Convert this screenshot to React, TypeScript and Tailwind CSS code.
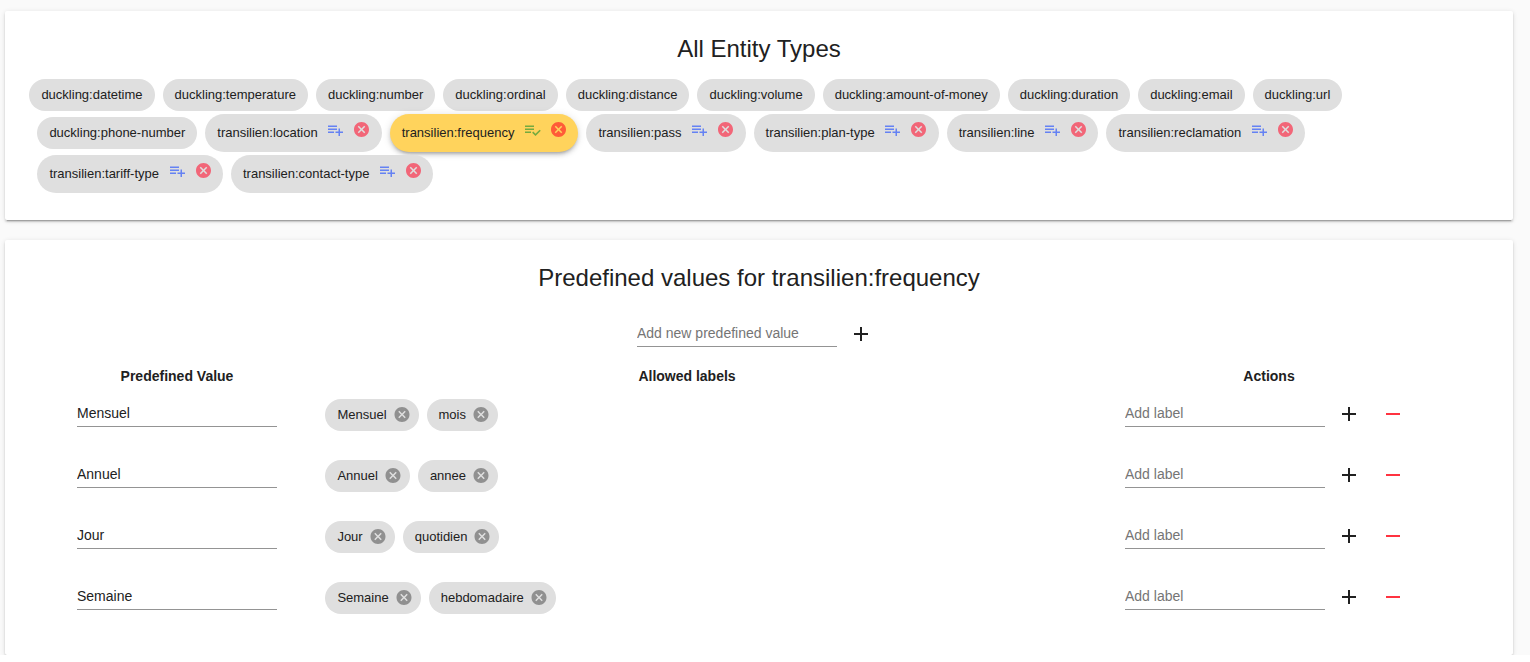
import React from "react";

const PATHS = {
  add: "M19 13h-6v6h-2v-6H5v-2h6V5h2v6h6v2z",
  remove: "M19 13H5v-2h14v2z",
  cancel:
    "M12 2C6.47 2 2 6.47 2 12s4.47 10 10 10 10-4.47 10-10S17.53 2 12 2zm5 13.59L15.59 17 12 13.41 8.41 17 7 15.59 10.59 12 7 8.41 8.41 7 12 10.59 15.59 7 17 8.41 13.41 12 17 15.59z",
  playlistAdd:
    "M14 10H2v2h12v-2zm0-4H2v2h12V6zm4 8v-4h-2v4h-4v2h4v4h2v-4h4v-2h-4zM2 16h8v-2H2v2z",
  playlistCheck:
    "M14 10H2v2h12v-2zm0-4H2v2h12V6zM2 16h8v-2H2v2zm19.5-4.5L23 13l-6.99 7-4.51-4.5L13 14l3.01 3 5.49-5.5z",
};

type IconProps = { name: keyof typeof PATHS; className: string; viewBox?: string };

function Icon({ name, className, viewBox = "0 0 24 24" }: IconProps) {
  return (
    <svg viewBox={viewBox} fill="currentColor" className={`shrink-0 ${className}`}>
      <path d={PATHS[name]} />
    </svg>
  );
}

type Entity = { name: string; editable?: boolean; selected?: boolean };

const ROWS: Entity[][] = [
  [
    "datetime", "temperature", "number", "ordinal", "distance",
    "volume", "amount-of-money", "duration", "email", "url",
  ].map((n) => ({ name: `duckling:${n}` })),
  [
    { name: "duckling:phone-number" },
    { name: "transilien:location", editable: true },
    { name: "transilien:frequency", editable: true, selected: true },
    { name: "transilien:pass", editable: true },
    { name: "transilien:plan-type", editable: true },
    { name: "transilien:line", editable: true },
    { name: "transilien:reclamation", editable: true },
  ],
  [
    { name: "transilien:tariff-type", editable: true },
    { name: "transilien:contact-type", editable: true },
  ],
];

function EntityChip({ entity }: { entity: Entity }) {
  if (!entity.editable) {
    return (
      <span className="flex h-8 items-center rounded-full bg-[#dfdfdf] px-3">{entity.name}</span>
    );
  }
  const tone = entity.selected
    ? "bg-[#ffd35c] shadow-[0_3px_3px_-2px_rgba(0,0,0,.2),0_3px_4px_0_rgba(0,0,0,.14),0_1px_8px_0_rgba(0,0,0,.12)]"
    : "bg-[#dfdfdf]";
  return (
    <span className={`flex h-[38px] items-center rounded-full pr-[11.4px] pl-3 ${tone}`}>
      {entity.name}
      <Icon
        name={entity.selected ? "playlistCheck" : "playlistAdd"}
        viewBox="-0.67 0 24 24"
        className={`mb-[7px] ml-[8.6px] size-[18px] ${entity.selected ? "text-[#74aa3f]" : "text-[#6582f3]"}`}
      />
      <Icon
        name="cancel"
        viewBox="-0.67 0.67 24 24"
        className={`mb-[7px] ml-[8px] size-[18px] ${entity.selected ? "text-[#ff5b38]" : "text-[#f26678]"}`}
      />
    </span>
  );
}

function Field({ value, placeholder }: { value?: string; placeholder?: string }) {
  return (
    <input
      className="block h-[27px] w-[200px] border-b border-[#949494] pb-px text-[14px] outline-none placeholder:text-[#757575]"
      defaultValue={value}
      placeholder={placeholder}
    />
  );
}

const VALUES = [
  { value: "Mensuel", labels: ["Mensuel", "mois"] },
  { value: "Annuel", labels: ["Annuel", "annee"] },
  { value: "Jour", labels: ["Jour", "quotidien"] },
  { value: "Semaine", labels: ["Semaine", "hebdomadaire"] },
];

const CARD =
  "rounded-[2px] bg-white shadow-[0_3px_1px_-2px_rgba(0,0,0,.2),0_2px_2px_0_rgba(0,0,0,.14),0_1px_5px_0_rgba(0,0,0,.12)]";

export default function App() {
  return (
    <div className="h-[662px] overflow-hidden bg-white font-['Liberation_Sans',Arial,sans-serif] text-[#212121]">
      <div className="h-[655px] overflow-hidden bg-[#fafafa] pt-[11px] pr-[17px] pl-[5px]">
        <section className={`h-[209px] pt-[22px] ${CARD}`}>
          <h1 className="text-center text-[24px] leading-8">All Entity Types</h1>
          <div className="mt-3.5 flex flex-col text-[13px]">
            {ROWS.map((row, i) => (
              <div
                key={i}
                className={`mb-[3px] flex items-center gap-2 ${i === 0 ? "pl-[24.4px]" : "pl-[32.4px]"}`}
              >
                {row.map((e) => (
                  <EntityChip key={e.name} entity={e} />
                ))}
              </div>
            ))}
          </div>
        </section>

        <section className={`mt-5 h-[415px] pt-[22px] ${CARD}`}>
          <h2 className="text-center text-[24px] leading-8">Predefined values for transilien:frequency</h2>
          <div className="mt-[26px] flex pl-[632px]">
            <Field placeholder="Add new predefined value" />
            <Icon name="add" className="mt-[2px] ml-3 size-6" />
          </div>
          <div className="mt-[19px] flex text-[14px] leading-5 font-bold">
            <div className="ml-[72px] w-[200px] text-center">Predefined Value</div>
            <div className="ml-[48px] w-[724px] text-center">Allowed labels</div>
            <div className="ml-[76px] w-[288px] text-center">Actions</div>
          </div>
          <div className="mt-[13px]">
            {VALUES.map((row) => (
              <div key={row.value} className="flex h-[61px] items-start pl-[72px]">
                <div className="pt-px">
                  <Field value={row.value} />
                </div>
                <div className="ml-[48px] flex w-[800px] gap-2 pl-[0.4px] text-[13px]">
                  {row.labels.map((l) => (
                    <span key={l} className="flex h-8 items-center rounded-full bg-[#dfdfdf] pr-2 pl-3">
                      {l}
                      <Icon
                        name="cancel"
                        viewBox="0 0.67 24 24"
                        className="ml-[6px] size-[18px] text-[#909090]"
                      />
                    </span>
                  ))}
                </div>
                <div className="flex pt-px">
                  <Field placeholder="Add label" />
                  <Icon name="add" className="mt-[2px] ml-3 size-6" />
                  <Icon name="remove" className="mt-[2px] ml-5 size-6 text-[#ff3340]" />
                </div>
              </div>
            ))}
          </div>
        </section>
      </div>
    </div>
  );
}
